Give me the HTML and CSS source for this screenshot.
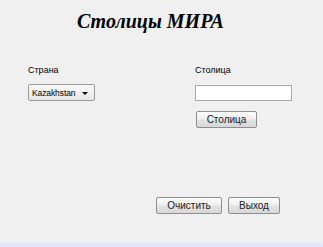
FILE: index.html
```html
<!DOCTYPE html>
<html lang="ru">
<head>
    <meta charset="UTF-8">
    <meta name="viewport" content="width=device-width, initial-scale=1.0">
    <title>Столицы МИРА</title>
    <link rel="stylesheet" href="styles.css">
</head>
<body>

    <h1 class="title">Столицы МИРА</h1>

    <form class="capitals" onsubmit="return false">
        <div class="column">
            <label class="field-label" for="country">Страна</label>
            <div class="select-box" id="country">
                <span>Kazakhstan</span>
                <svg class="arrow" width="6" height="3" viewBox="0 0 6 3"><path d="M0 0h6L3 3z" fill="#000"/></svg>
            </div>
        </div>

        <div class="column">
            <label class="field-label" for="capital">Столица</label>
            <input class="text-input" type="text" id="capital">
            <button class="btn btn-capital" type="button">Столица</button>
        </div>
    </form>

    <div class="actions">
        <button class="btn btn-clear" type="button">Очистить</button>
        <button class="btn btn-exit" type="button">Выход</button>
    </div>

    <div class="bottom-strip"></div>

</body>
</html>
```

FILE: styles.css
```css
body {
    margin: 0;
    height: 247px;
    background-color: #f0f0f0;
    font-family: "Liberation Sans", Arial, sans-serif;
    color: #000;
    display: flex;
    flex-direction: column;
    overflow: hidden;
}

.title {
    margin: 0;
    padding: 9px 0 0 77px;
    font-family: "Liberation Serif", "Times New Roman", serif;
    font-style: italic;
    font-weight: bold;
    font-size: 20px;
    line-height: 24px;
}

.capitals {
    display: grid;
    grid-template-columns: 167px 1fr;
    margin-top: 32px;
    padding-left: 28px;
}

.column {
    display: flex;
    flex-direction: column;
    align-items: flex-start;
}

.field-label {
    font-size: 9px;
    line-height: 11px;
    margin-bottom: 8px;
}

.select-box {
    box-sizing: border-box;
    width: 67px;
    height: 17px;
    border: 1px solid #9a9a9a;
    border-radius: 2px;
    background: linear-gradient(#fafafa, #e6e6e6);
    display: flex;
    align-items: center;
    justify-content: space-between;
    padding: 0 6px 0 3px;
    font-size: 8.5px;
    letter-spacing: -0.1px;
}

.arrow {
    margin-top: 1px;
}

.text-input {
    box-sizing: border-box;
    width: 97px;
    height: 16px;
    margin: 1px 0 0 0;
    border: 1px solid #a9a9a9;
    background-color: #fff;
    padding: 0 2px;
}

.btn {
    box-sizing: border-box;
    height: 17px;
    padding: 0;
    border: 1px solid #8e8e8e;
    border-radius: 2px;
    background: linear-gradient(#fcfcfc 0%, #f0f0f0 45%, #e2e2e2 55%, #d8d8d8 100%);
    font-family: "Liberation Sans", Arial, sans-serif;
    font-size: 10px;
    color: #222;
    cursor: pointer;
}

.btn-capital {
    width: 61px;
    margin: 10px 0 0 1px;
}

.actions {
    display: flex;
    justify-content: flex-end;
    gap: 6px;
    margin-top: 69px;
    padding-right: 43px;
}

.btn-clear {
    width: 66px;
}

.btn-exit {
    width: 52px;
}

.bottom-strip {
    margin-top: auto;
    height: 5px;
    background: linear-gradient(#ecebf6, #e4e2f8);
}
```
